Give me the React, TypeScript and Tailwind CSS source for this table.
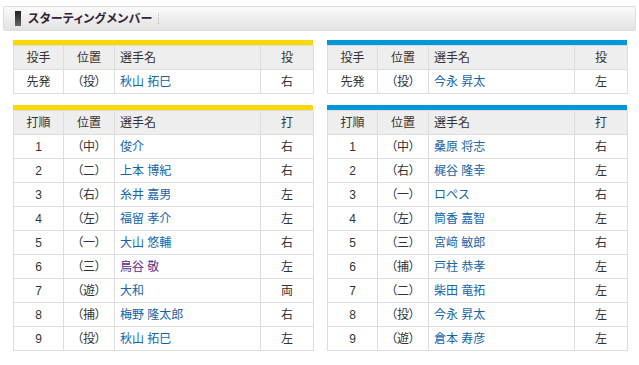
import React from 'react'

type Row = { no: string; pos: string; name: string; hand: string; visited?: boolean }

const leftPitcher: Row = { no: '先発', pos: '（投）', name: '秋山 拓巳', hand: '右' }
const rightPitcher: Row = { no: '先発', pos: '（投）', name: '今永 昇太', hand: '左' }

const leftOrder: Row[] = [
  { no: '1', pos: '（中）', name: '俊介', hand: '右' },
  { no: '2', pos: '（二）', name: '上本 博紀', hand: '右' },
  { no: '3', pos: '（右）', name: '糸井 嘉男', hand: '左' },
  { no: '4', pos: '（左）', name: '福留 孝介', hand: '左' },
  { no: '5', pos: '（一）', name: '大山 悠輔', hand: '右' },
  { no: '6', pos: '（三）', name: '鳥谷 敬', hand: '左', visited: true },
  { no: '7', pos: '（遊）', name: '大和', hand: '両' },
  { no: '8', pos: '（捕）', name: '梅野 隆太郎', hand: '右' },
  { no: '9', pos: '（投）', name: '秋山 拓巳', hand: '左' },
]

const rightOrder: Row[] = [
  { no: '1', pos: '（中）', name: '桑原 将志', hand: '右' },
  { no: '2', pos: '（右）', name: '梶谷 隆幸', hand: '左' },
  { no: '3', pos: '（一）', name: 'ロペス', hand: '右' },
  { no: '4', pos: '（左）', name: '筒香 嘉智', hand: '左' },
  { no: '5', pos: '（三）', name: '宮﨑 敏郎', hand: '右' },
  { no: '6', pos: '（捕）', name: '戸柱 恭孝', hand: '左' },
  { no: '7', pos: '（二）', name: '柴田 竜拓', hand: '左' },
  { no: '8', pos: '（投）', name: '今永 昇太', hand: '左' },
  { no: '9', pos: '（遊）', name: '倉本 寿彦', hand: '左' },
]

function MemberTable({
  heads,
  rows,
  bar,
}: {
  heads: string[]
  rows: Row[]
  bar: string
}) {
  const th = 'h-[24px] p-0 border border-[#dddddd] bg-[#eeeeee] font-normal'
  const td = 'h-[24px] p-0 border border-[#dddddd]'
  return (
    <div className="w-[300px]">
      <div className={`h-[5px] ${bar}`} />
      <table className="w-[300px] table-fixed border-collapse text-[12px] leading-none text-[#333333]">
        <colgroup>
          <col className="w-[50px]" />
          <col className="w-[51px]" />
          <col className="w-[146px]" />
          <col className="w-[53px]" />
        </colgroup>
        <thead>
          <tr>
            <th className={`${th} text-center`}>{heads[0]}</th>
            <th className={`${th} text-center`}>位置</th>
            <th className={`${th} text-left pl-[5px]`}>選手名</th>
            <th className={`${th} text-center`}>{heads[1]}</th>
          </tr>
        </thead>
        <tbody>
          {rows.map((r) => (
            <tr key={r.no + r.name}>
              <td className={`${td} text-center`}>{r.no}</td>
              <td className={`${td} text-center [font-feature-settings:'palt']`}>{r.pos}</td>
              <td className={`${td} pl-[5px]`}>
                <a className={r.visited ? 'text-[#5c2a8e]' : 'text-[#1565a8]'}>{r.name}</a>
              </td>
              <td className={`${td} text-center`}>{r.hand}</td>
            </tr>
          ))}
        </tbody>
      </table>
    </div>
  )
}

export default function App() {
  return (
    <div className="w-[639px] h-[365px] bg-white pt-[6px] font-['Liberation_Sans','Noto_Sans_CJK_JP',sans-serif]">
      <div className="mx-[3px] h-[25px] flex items-center rounded-[2px] border border-[#dddddd] bg-gradient-to-b from-[#fbfbfb] via-[#eeeeee] to-[#e2e2e2]">
        <div className="ml-[11px] w-[6px] h-[15px] bg-gradient-to-b from-[#222222] to-[#666666]" />
        <h2 className="ml-[7px] text-[12px] font-bold text-[#33203a] tracking-[0.3px] [font-feature-settings:'palt']">
          スターティングメンバー
        </h2>
        <div className="ml-[5px] h-[11px] border-l border-dotted border-[#bbbbbb]" />
      </div>

      <div className="flex gap-[14px] pl-[13px] pt-[9px]">
        <div className="flex flex-col gap-[11px]">
          <MemberTable heads={['投手', '投']} rows={[leftPitcher]} bar="bg-[#fdd800]" />
          <MemberTable heads={['打順', '打']} rows={leftOrder} bar="bg-[#fdd800]" />
        </div>
        <div className="flex flex-col gap-[11px]">
          <MemberTable heads={['投手', '投']} rows={[rightPitcher]} bar="bg-[#0097db]" />
          <MemberTable heads={['打順', '打']} rows={rightOrder} bar="bg-[#0097db]" />
        </div>
      </div>
    </div>
  )
}
